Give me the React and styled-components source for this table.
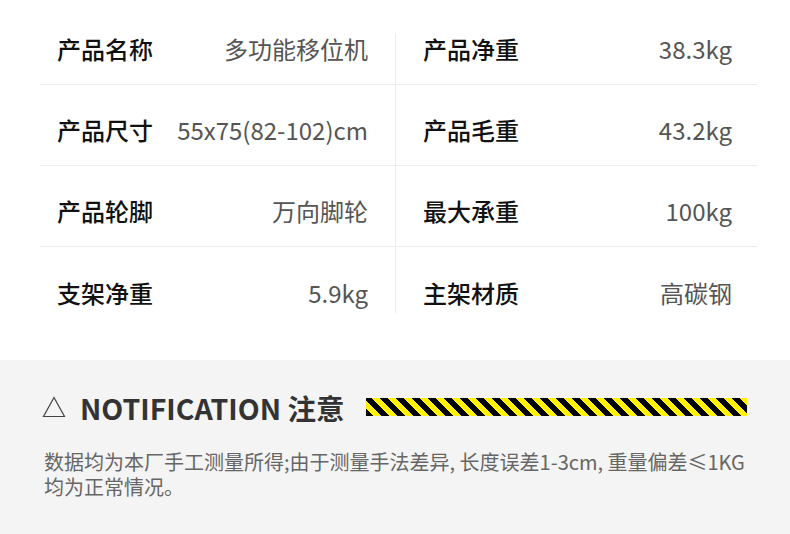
import React from "react";
import styled, { createGlobalStyle } from "styled-components";

const specs = [
  [
    { label: "产品名称", value: "多功能移位机" },
    { label: "产品净重", value: "38.3kg" },
  ],
  [
    { label: "产品尺寸", value: "55x75(82-102)cm" },
    { label: "产品毛重", value: "43.2kg" },
  ],
  [
    { label: "产品轮脚", value: "万向脚轮" },
    { label: "最大承重", value: "100kg" },
  ],
  [
    { label: "支架净重", value: "5.9kg" },
    { label: "主架材质", value: "高碳钢" },
  ],
];

const App = () => {
  return (
    <Page>
      <GlobalStyle />
      <SpecSection>
        <Table>
          {specs.map((row, i) => (
            <Row key={i}>
              {row.map((cell, j) => (
                <Cell key={cell.label} $side={j === 0 ? "left" : "right"}>
                  <Label>{cell.label}</Label>
                  <Value>{cell.value}</Value>
                </Cell>
              ))}
            </Row>
          ))}
        </Table>
      </SpecSection>
      <Notice>
        <NoticeHeader>
          <Triangle width="24" height="22" viewBox="0 0 24 22">
            <path d="M12 1.5 L22.5 20.5 L1.5 20.5 Z" fill="none" stroke="#444" strokeWidth="1.2" strokeLinejoin="miter" />
          </Triangle>
          <Title>NOTIFICATION 注意</Title>
          <Stripes />
        </NoticeHeader>
        <NoticeText>
          数据均为本厂手工测量所得;由于测量手法差异, 长度误差1-3cm, 重量偏差≤1KG均为正常情况。
        </NoticeText>
      </Notice>
    </Page>
  );
};

const GlobalStyle = createGlobalStyle`
  html, body {
    margin: 0;
    padding: 0;
    background: #fff;
  }
  * {
    box-sizing: border-box;
  }
`;

const Page = styled.div`
  width: 790px;
  height: 534px;
  overflow: hidden;
  font-family: "Noto Sans CJK SC", "Noto Sans", sans-serif;
  display: flex;
  flex-direction: column;
`;

const SpecSection = styled.div`
  height: 360px;
  padding: 4px 33px 0 40px;
  background: #fff;
`;

const Table = styled.div`
  position: relative;
  display: grid;
  grid-template-rows: repeat(4, 81px);

  &::after {
    content: "";
    position: absolute;
    left: 355px;
    top: 29px;
    height: 280px;
    width: 1px;
    background: #ececec;
  }
`;

const Row = styled.div`
  display: grid;
  grid-template-columns: 355px 1fr;
  border-bottom: 1px solid #ececec;

  &:last-child {
    border-bottom: none;
  }
`;

const Cell = styled.div`
  display: flex;
  align-items: center;
  justify-content: space-between;
  padding: 9px ${(p) => (p.$side === "left" ? "27px" : "25px")} 0
    ${(p) => (p.$side === "left" ? "17px" : "28px")};
`;

const Label = styled.span`
  font-size: 24px;
  font-weight: 500;
  color: #111;
  white-space: nowrap;
`;

const Value = styled.span`
  font-size: 24px;
  font-weight: 400;
  color: #555;
  white-space: nowrap;
`;

const Notice = styled.div`
  flex: 1;
  background: #f4f4f4;
  padding: 32px 43px 0 44px;
`;

const NoticeHeader = styled.div`
  display: flex;
  align-items: center;
  height: 30px;
`;

const Triangle = styled.svg`
  flex: none;
  margin-left: -2px;
  margin-right: 14px;
`;

const Title = styled.span`
  font-size: 28.5px;
  font-weight: 700;
  color: #333;
  white-space: nowrap;
`;

const Stripes = styled.div`
  flex: 1;
  height: 18px;
  margin-left: 22px;
  background: repeating-linear-gradient(
    45deg,
    #000 0,
    #000 5.6px,
    #fff200 5.6px,
    #fff200 11.3px
  );
`;

const NoticeText = styled.p`
  margin: 27px 0 0;
  font-size: 20px;
  line-height: 25px;
  color: #666;
`;

export default App;
